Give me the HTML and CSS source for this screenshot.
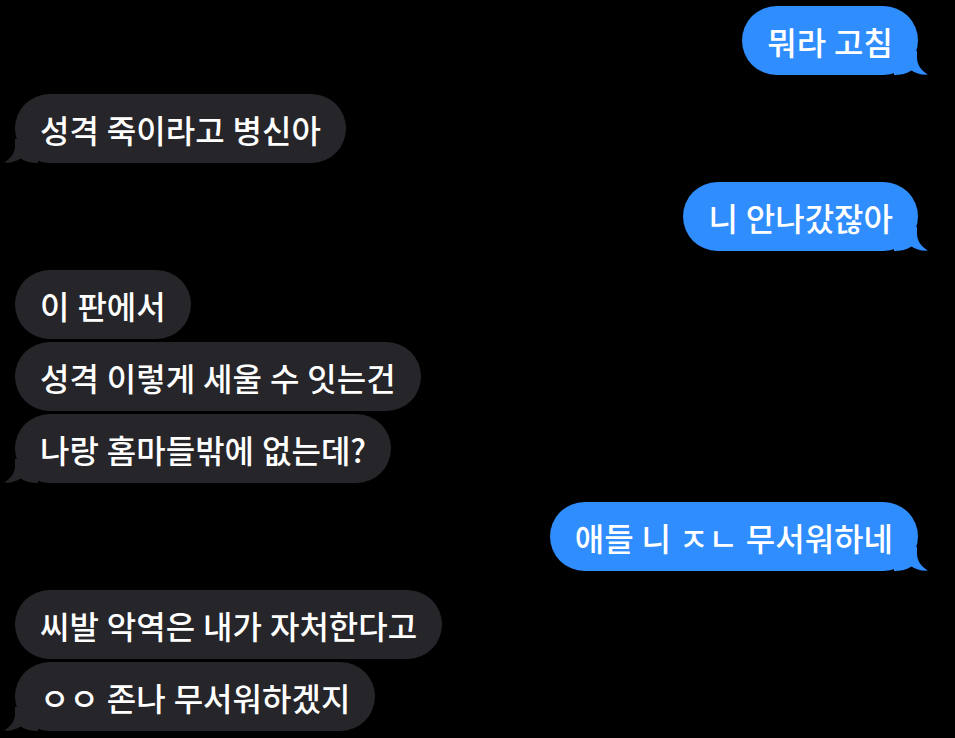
FILE: index.html
```html
<!DOCTYPE html>
<html lang="ko">
<head>
<meta charset="utf-8">
<link rel="stylesheet" href="styles.css">
</head>
<body>
<div class="chat">
  <div class="group sent">
    <div class="bubble tail">뭐라 고침<svg class="tl" viewBox="0 0 34 24"><path d="M11,0 L11,6 C11,15 6,20 0,23.6 C6,24.2 12,22.5 16.5,19.5 C21,22.5 27,24 34,24 L34,0 Z"/></svg></div>
  </div>
  <div class="group recv">
    <div class="bubble tail">성격 죽이라고 병신아<svg class="tl" viewBox="0 0 34 24"><path d="M11,0 L11,6 C11,15 6,20 0,23.6 C6,24.2 12,22.5 16.5,19.5 C21,22.5 27,24 34,24 L34,0 Z"/></svg></div>
  </div>
  <div class="group sent">
    <div class="bubble tail">니 안나갔잖아<svg class="tl" viewBox="0 0 34 24"><path d="M11,0 L11,6 C11,15 6,20 0,23.6 C6,24.2 12,22.5 16.5,19.5 C21,22.5 27,24 34,24 L34,0 Z"/></svg></div>
  </div>
  <div class="group recv">
    <div class="bubble">이 판에서</div>
    <div class="bubble">성격 이렇게 세울 수 잇는건</div>
    <div class="bubble tail">나랑 홈마들밖에 없는데?<svg class="tl" viewBox="0 0 34 24"><path d="M11,0 L11,6 C11,15 6,20 0,23.6 C6,24.2 12,22.5 16.5,19.5 C21,22.5 27,24 34,24 L34,0 Z"/></svg></div>
  </div>
  <div class="group sent">
    <div class="bubble tail">애들 니 ㅈㄴ 무서워하네<svg class="tl" viewBox="0 0 34 24"><path d="M11,0 L11,6 C11,15 6,20 0,23.6 C6,24.2 12,22.5 16.5,19.5 C21,22.5 27,24 34,24 L34,0 Z"/></svg></div>
  </div>
  <div class="group recv">
    <div class="bubble">씨발 악역은 내가 자처한다고</div>
    <div class="bubble tail">ㅇㅇ 존나 무서워하겠지<svg class="tl" viewBox="0 0 34 24"><path d="M11,0 L11,6 C11,15 6,20 0,23.6 C6,24.2 12,22.5 16.5,19.5 C21,22.5 27,24 34,24 L34,0 Z"/></svg></div>
  </div>
</div>
</body>
</html>
```
FILE: styles.css
```css
html, body {
  margin: 0;
  padding: 0;
  background: #000;
}
body {
  width: 955px;
  height: 738px;
  overflow: hidden;
  font-family: "Noto Sans CJK KR", "Noto Sans", sans-serif;
}
.chat {
  display: flex;
  flex-direction: column;
  gap: 19px;
  padding: 6px 37px 0 15px;
}
.group {
  display: flex;
  flex-direction: column;
  gap: 3px;
}
.group.sent { align-items: flex-end; }
.group.recv { align-items: flex-start; }
.bubble {
  position: relative;
  display: flex;
  align-items: center;
  height: 69px;
  padding: 0 25px;
  border-radius: 35px;
  font-size: 32px;
  font-weight: 500;
  word-spacing: -1px;
  color: #fff;
  white-space: nowrap;
  box-sizing: border-box;
}
.sent .bubble { background: #2f8dfd; }
.recv .bubble { background: #262529; }
.tl {
  position: absolute;
  bottom: 0;
  width: 34px;
  height: 24px;
}
.recv .tl { left: -11px; fill: #262529; }
.sent .tl { right: -10px; fill: #2f8dfd; transform: scaleX(-1); }
```
